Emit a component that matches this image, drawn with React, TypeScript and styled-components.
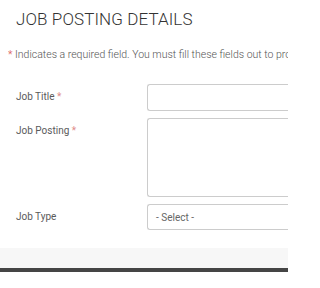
import React from "react";
import styled, { createGlobalStyle } from "styled-components";

const Global = createGlobalStyle`
  html, body { margin: 0; padding: 0; background: #fff; overflow: hidden; width: 288px; }
  body { font-family: Roboto, "Noto Sans", "Liberation Sans", sans-serif; }
  * { box-sizing: border-box; }
`;

const Page = styled.div`
  width: 288px;
  height: 288px;
  overflow: hidden;
  display: flex;
  flex-direction: column;
`;

const Content = styled.div`
  padding: 9px 0 18px 8px;
  display: flex;
  flex-direction: column;
  min-width: 0;
`;

const Heading = styled.h1`
  margin: 0 0 0 8px;
  font-size: 17px;
  line-height: 20px;
  font-weight: 300;
  color: #333;
  letter-spacing: 0.1px;
  white-space: nowrap;
`;

const Notice = styled.p`
  margin: 19px 0 0 0;
  font-size: 10.5px;
  line-height: 14px;
  font-weight: 300;
  color: #555;
  white-space: nowrap;
  overflow: hidden;
`;

const Req = styled.span`
  color: #d9534f;
`;

const Form = styled.div`
  margin-top: 22px;
  padding-left: 8px;
  display: grid;
  grid-template-columns: 131px 1fr;
  row-gap: 7px;
`;

const Label = styled.label`
  font-size: 10px;
  line-height: 14px;
  color: #5a5a5a;
  padding-top: 6px;
  white-space: nowrap;
`;

const LabelReq = styled.span`
  color: #e08a88;
`;

const fieldBase = `
  border: 1px solid #ccc;
  border-right: none;
  border-radius: 3px 0 0 3px;
  background: #fff;
  font-family: Roboto, "Noto Sans", "Liberation Sans", sans-serif;
  font-size: 10px;
  color: #555;
  outline: none;
  margin: 0;
`;

const Input = styled.input`
  ${fieldBase}
  height: 27px;
  width: 100%;
  padding: 0 8px;
`;

const TextArea = styled.textarea`
  ${fieldBase}
  height: 79px;
  width: 100%;
  resize: none;
  padding: 6px 8px;
  display: block;
`;

const Select = styled.div`
  ${fieldBase}
  height: 26px;
  width: 100%;
  padding: 0 8px;
  display: flex;
  align-items: center;
  color: #666;
`;

const Band = styled.div`
  height: 20px;
  background: #f7f7f7;
`;

const DarkBar = styled.div`
  height: 4px;
  background: #454545;
`;

export default function App() {
  return (
    <Page>
      <Global />
      <Content>
        <Heading>JOB POSTING DETAILS</Heading>
        <Notice>
          <Req>*</Req> Indicates a required field. You must fill these fields out to proceed.
        </Notice>
        <Form>
          <Label>
            Job Title <LabelReq>*</LabelReq>
          </Label>
          <Input />
          <Label>
            Job Posting <LabelReq>*</LabelReq>
          </Label>
          <TextArea />
          <Label>Job Type</Label>
          <Select>- Select -</Select>
        </Form>
      </Content>
      <Band />
      <DarkBar />
    </Page>
  );
}
